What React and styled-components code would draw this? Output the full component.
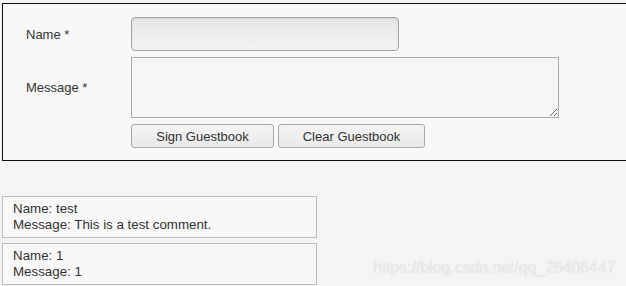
import React from 'react'
import styled, { createGlobalStyle } from 'styled-components'

const GlobalStyle = createGlobalStyle`
  html, body {
    margin: 0;
    background: #f4f4f4;
    overflow: hidden;
  }
  body {
    font-family: "Liberation Sans", Arial, sans-serif;
    font-size: 13px;
    color: #333;
  }
`;

const comments = [
  { name: 'test', message: 'This is a test comment.' },
  { name: '1', message: '1' },
];

const App = () => {
  return (
    <Page>
      <GlobalStyle />
      <Form onSubmit={(e) => e.preventDefault()}>
        <Row>
          <Label>Name *</Label>
          <NameInput type="text" />
        </Row>
        <Row>
          <Label>Message *</Label>
          <MessageInput />
        </Row>
        <Row>
          <span />
          <Buttons>
            <Button type="submit" width={143}>Sign Guestbook</Button>
            <Button type="button" width={147}>Clear Guestbook</Button>
          </Buttons>
        </Row>
      </Form>
      <List>
        {comments.map((c, i) => (
          <Comment key={i}>
            <div>Name: {c.name}</div>
            <div>Message: {c.message}</div>
          </Comment>
        ))}
      </List>
      <Watermark>https://blog.csdn.net/qq_26406447</Watermark>
    </Page>
  );
}

const Page = styled.div`
  position: relative;
  height: 286px;
  padding: 3px 0 0 2px;
  box-sizing: border-box;
`;

const Form = styled.form`
  width: 680px;
  box-sizing: border-box;
  border: 1px solid #111;
  background: #f7f8f7;
  padding: 13px 0 12px 23px;
  display: flex;
  flex-direction: column;
  gap: 6px;
`;

const Row = styled.div`
  display: grid;
  grid-template-columns: 105px auto;
  align-items: center;
`;

const Label = styled.label`
  color: #333;
`;

const NameInput = styled.input`
  width: 268px;
  height: 34px;
  box-sizing: border-box;
  border: 1px solid #a4a4a4;
  border-radius: 4px;
  background: linear-gradient(#e6e6e6, #f3f3f3);
  box-shadow: inset 0 1px 2px rgba(0, 0, 0, 0.08);
  outline: none;
`;

const MessageInput = styled.textarea`
  width: 428px;
  height: 61px;
  box-sizing: border-box;
  border: 1px solid #aaa;
  border-radius: 0;
  background: #f6f6f6;
  margin: 0;
  display: block;
  outline: none;
`;

const Buttons = styled.div`
  display: flex;
  gap: 4px;
`;

const Button = styled.button`
  width: ${(p) => p.width}px;
  height: 24px;
  box-sizing: border-box;
  border: 1px solid #a8a8a8;
  border-radius: 3px;
  background: linear-gradient(#f5f5f5, #e9e9e9);
  font-family: "Liberation Sans", Arial, sans-serif;
  font-size: 13px;
  color: #333;
  padding: 0;
  cursor: pointer;
`;

const List = styled.div`
  margin-top: 35px;
  display: flex;
  flex-direction: column;
  gap: 5px;
`;

const Comment = styled.div`
  width: 315px;
  box-sizing: border-box;
  border: 1px solid #bdbdbd;
  background: #f7f8f7;
  padding: 4px 10px 4px;
  font-size: 13.33px;
  line-height: 16px;
`;

const Watermark = styled.div`
  position: absolute;
  left: 373px;
  top: 259px;
  font-size: 15.8px;
  color: #ececec;
  text-shadow: 0 0 1px #d8d8d8;
`;

export default App
